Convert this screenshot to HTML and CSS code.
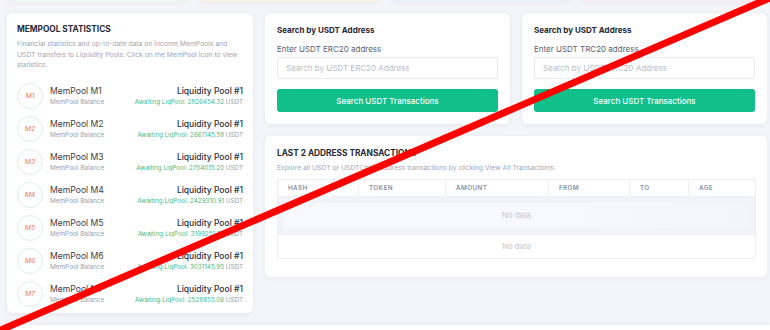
FILE: index.html
```html
<!DOCTYPE html>
<html lang="en">
<head>
  <meta charset="UTF-8">
  <meta name="viewport" content="width=device-width, initial-scale=1.0">
  <title>MemPool Dashboard</title>
  <link rel="stylesheet" href="styles.css">
</head>
<body>
  <div class="page">
    <div class="stats">
      <div class="stat stat-green"></div>
      <div class="stat stat-orange"></div>
      <div class="stat stat-blue"></div>
      <div class="stat stat-pink"></div>
    </div>

    <div class="layout">
      <div class="card mempool">
        <h2 class="card-title">MEMPOOL STATISTICS</h2>
        <p class="card-text">Financial statistics and up-to-date data on income MemPools and USDT transfers to Liquidity Pools. Click on the MemPool icon to view statistics.</p>
        <ul class="pool-list">
          <li class="pool">
            <span class="pool-icon">M1</span>
            <div class="pool-name"><strong>MemPool M1</strong><small>MemPool Balance</small></div>
            <div class="pool-liq"><strong>Liquidity Pool #1</strong><small>Awaiting LiqPool: 2826454.32 <em>USDT</em></small></div>
          </li>
          <li class="pool">
            <span class="pool-icon">M2</span>
            <div class="pool-name"><strong>MemPool M2</strong><small>MemPool Balance</small></div>
            <div class="pool-liq"><strong>Liquidity Pool #1</strong><small>Awaiting LiqPool: 2661145.58 <em>USDT</em></small></div>
          </li>
          <li class="pool">
            <span class="pool-icon">M3</span>
            <div class="pool-name"><strong>MemPool M3</strong><small>MemPool Balance</small></div>
            <div class="pool-liq"><strong>Liquidity Pool #1</strong><small>Awaiting LiqPool: 2754015.20 <em>USDT</em></small></div>
          </li>
          <li class="pool">
            <span class="pool-icon">M4</span>
            <div class="pool-name"><strong>MemPool M4</strong><small>MemPool Balance</small></div>
            <div class="pool-liq"><strong>Liquidity Pool #1</strong><small>Awaiting LiqPool: 2429310.91 <em>USDT</em></small></div>
          </li>
          <li class="pool">
            <span class="pool-icon">M5</span>
            <div class="pool-name"><strong>MemPool M5</strong><small>MemPool Balance</small></div>
            <div class="pool-liq"><strong>Liquidity Pool #1</strong><small>Awaiting LiqPool: 3199251.74 <em>USDT</em></small></div>
          </li>
          <li class="pool">
            <span class="pool-icon">M6</span>
            <div class="pool-name"><strong>MemPool M6</strong><small>MemPool Balance</small></div>
            <div class="pool-liq"><strong>Liquidity Pool #1</strong><small>Awaiting LiqPool: 3031145.95 <em>USDT</em></small></div>
          </li>
          <li class="pool">
            <span class="pool-icon">M7</span>
            <div class="pool-name"><strong>MemPool M7</strong><small>MemPool Balance</small></div>
            <div class="pool-liq"><strong>Liquidity Pool #1</strong><small>Awaiting LiqPool: 2528855.06 <em>USDT</em></small></div>
          </li>
        </ul>
      </div>

      <div class="right">
        <div class="search-row">
          <form class="card search">
            <h3 class="search-title">Search by USDT Address</h3>
            <label for="erc20">Enter USDT ERC20 address</label>
            <input type="text" id="erc20" placeholder="Search by USDT ERC20 Address">
            <button type="submit">Search USDT Transactions</button>
          </form>
          <form class="card search">
            <h3 class="search-title">Search by USDT Address</h3>
            <label for="trc20">Enter USDT TRC20 address</label>
            <input type="text" id="trc20" placeholder="Search by USDT TRC20 Address">
            <button type="submit">Search USDT Transactions</button>
          </form>
        </div>

        <div class="card transactions">
          <h2 class="card-title">LAST 2 ADDRESS TRANSACTIONS</h2>
          <p class="card-text">Explore all USDT or USDTChain address transactions by clicking View All Transactions.</p>
          <table class="tx-table">
            <thead>
              <tr>
                <th class="col-hash">Hash</th>
                <th class="col-token">Token</th>
                <th class="col-amount">Amount</th>
                <th class="col-from">From</th>
                <th class="col-to">To</th>
                <th>Age</th>
              </tr>
            </thead>
            <tbody>
              <tr class="row-empty row-hover">
                <td colspan="6"><div class="empty-box">No data</div></td>
              </tr>
              <tr class="row-empty">
                <td colspan="6">No data</td>
              </tr>
            </tbody>
          </table>
        </div>
      </div>
    </div>
  </div>
  <footer class="footer"></footer>

  <svg class="strike" viewBox="0 0 770 330" preserveAspectRatio="none">
    <line x1="-4" y1="332" x2="772" y2="-3" stroke="#ff0000" stroke-width="7" />
  </svg>
</body>
</html>
```

FILE: styles.css
```css
* {
  box-sizing: border-box;
}
body {
  margin: 0;
  font-family: Inter, "Noto Sans", sans-serif;
  background-color: #f4f5f9;
  color: #2b2d3a;
  overflow: hidden;
}
.page {
  margin-top: -58px;
  padding: 0 3px 0 7px;
}
.stats {
  display: grid;
  grid-template-columns: repeat(4, 1fr);
  gap: 12px;
  padding-right: 5px;
}
.stat {
  height: 60px;
  border-radius: 6px;
  background: #fff;
  box-shadow: 0 1px 4px rgba(40, 45, 80, 0.06);
}
.stat-green {
  background: linear-gradient(180deg, #fff 60%, #eaf8ef 100%);
}
.stat-orange {
  background: linear-gradient(180deg, #fff 60%, #fdf3e1 100%);
}
.stat-blue {
  background: linear-gradient(180deg, #fff 60%, #e9f1fb 100%);
}
.stat-pink {
  background: linear-gradient(180deg, #fff 60%, #fbeaf2 100%);
}
.layout {
  display: grid;
  grid-template-columns: 246px 1fr;
  gap: 12px;
  margin-top: 11px;
  align-items: start;
}
.card {
  background: #fff;
  border-radius: 6px;
  box-shadow: 0 1px 5px rgba(40, 45, 80, 0.07);
}
.card-title {
  margin: 0;
  font-size: 8.3px;
  font-weight: 700;
  color: #262833;
}
.card-text {
  margin: 5px 0 0;
  font-size: 6.8px;
  line-height: 10.7px;
  color: #a2a5b5;
}

/* mempool list */
.mempool {
  height: 300px;
  padding: 11px 10px;
}
.pool-list {
  list-style: none;
  margin: 8px 0 0;
  padding: 0;
}
.pool {
  display: flex;
  align-items: center;
  height: 33px;
}
.pool-icon {
  width: 26px;
  height: 26px;
  border: 1px solid #d9efe4;
  border-radius: 50%;
  display: flex;
  align-items: center;
  justify-content: center;
  font-size: 6.8px;
  font-style: italic;
  color: #ef7a48;
  flex-shrink: 0;
}
.pool-name {
  margin-left: 7px;
  flex: 1;
}
.pool strong {
  display: block;
  font-size: 8.6px;
  font-weight: 400;
  color: #3a3c48;
}
.pool small {
  display: block;
  margin-top: 2px;
  font-size: 6.4px;
  color: #9a9dad;
}
.pool-liq {
  text-align: right;
}
.pool-liq strong {
  font-size: 8.5px;
  font-weight: 500;
  color: #2b2d38;
}
.pool-liq small {
  font-size: 6.3px;
  color: #45b97f;
}
.pool-liq em {
  font-style: normal;
  color: #9a9dad;
}

/* search cards */
.right {
  display: flex;
  flex-direction: column;
  gap: 12px;
}
.search-row {
  display: grid;
  grid-template-columns: 1fr 1fr;
  gap: 12px;
}
.search {
  height: 111px;
  padding: 12px 12px 11px;
  display: flex;
  flex-direction: column;
}
.search-title {
  margin: 0;
  font-size: 8px;
  font-weight: 700;
  color: #262833;
}
.search label {
  margin-top: 9px;
  font-size: 8px;
  color: #5b5e6e;
}
.search input {
  margin-top: 3px;
  height: 22px;
  padding: 0 8px;
  border: 1px solid #e8eaf0;
  border-radius: 3px;
  font-family: inherit;
  font-size: 8px;
}
.search input::placeholder {
  color: #b9bcc8;
}
.search button {
  margin-top: 10px;
  height: 23px;
  border: none;
  border-radius: 3px;
  background-color: #10bf89;
  color: #fff;
  font-family: inherit;
  font-size: 8px;
  font-weight: 500;
  cursor: pointer;
}

/* transactions */
.transactions {
  height: 141px;
  padding: 12px 11px 0 12px;
}
.tx-table {
  width: 100%;
  margin-top: 5px;
  border-collapse: collapse;
  border: 1px solid #eceef3;
}
.tx-table th {
  height: 17px;
  padding: 0 10px;
  border-right: 1px solid #eceef3;
  font-size: 6.3px;
  font-weight: 600;
  letter-spacing: 0.4px;
  text-transform: uppercase;
  text-align: left;
  color: #8c90a5;
}
.col-hash { width: 81px; }
.col-token { width: 87px; }
.col-amount { width: 103px; }
.col-from { width: 81px; }
.col-to { width: 59px; }
.row-empty td {
  height: 24px;
  border-top: 1px solid #eceef3;
  text-align: center;
  font-size: 7.8px;
  color: #c3c5cf;
}
.row-hover td {
  height: 36px;
  padding: 6px 5px;
  background: #f2f3fb;
}
.empty-box {
  height: 25px;
  line-height: 25px;
  background: linear-gradient(90deg, #f8f9fe 60%, #f4f5fc 100%);
}

.footer {
  margin-top: 12px;
  height: 5px;
  background: #fff;
  box-shadow: 0 -1px 4px rgba(40, 45, 80, 0.05);
}
.strike {
  position: absolute;
  top: 0;
  left: 0;
  width: 770px;
  height: 330px;
  pointer-events: none;
}
```
